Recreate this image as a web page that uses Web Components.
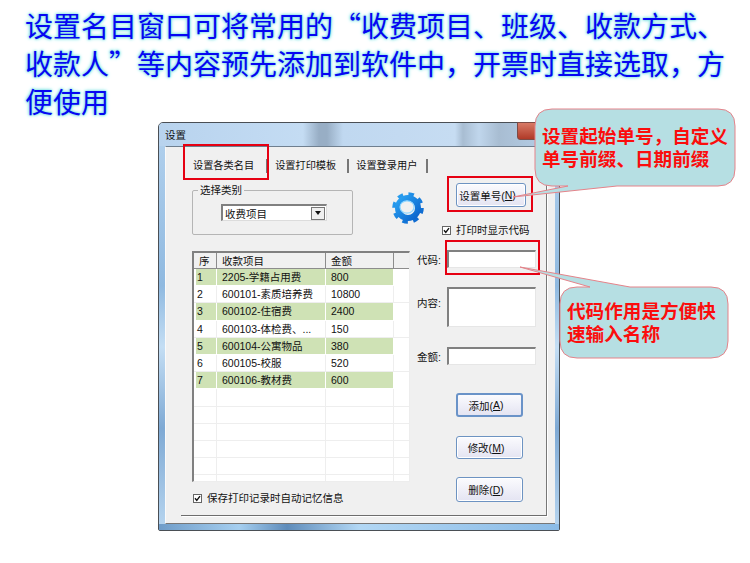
<!DOCTYPE html>
<html lang="zh-CN">
<head>
<meta charset="utf-8">
<title>设置</title>
<style>
    html, body { margin: 0; background: #fff; }
    body { width: 750px; height: 563px; overflow: hidden; position: relative; font-family: "Liberation Sans", "Noto Sans CJK SC", sans-serif; }
</style>
</head>
<body>
<guide-heading>设置名目窗口可将常用的“收费项目、班级、收款方式、收款人”等内容预先添加到软件中，开票时直接选取，方便使用</guide-heading>
<settings-dialog></settings-dialog>

<mark-box style="left:183px;top:144px;width:86px;height:36px"></mark-box>
<mark-box style="left:447px;top:176px;width:86px;height:36px"></mark-box>
<mark-box style="left:445px;top:240px;width:95px;height:35px"></mark-box>

<note-callout style="left:535px;top:109px;width:200px;height:77px" tip="-22,88 33,77 82,77">设置起始单号，自定义<br>单号前缀、日期前缀</note-callout>
<note-callout style="left:560px;top:287px;width:168px;height:71px" tip="-40,-20 30,0 70,0">代码作用是方便快<br>速输入名称</note-callout>

<script>
class GuideHeading extends HTMLElement {
    constructor() {
        super();
        this.attachShadow({ mode: 'open' });
        this.shadowRoot.innerHTML = `
            <style>
                :host {
                    display: block;
                    box-sizing: border-box;
                    width: 730px;
                    height: 122px;
                    padding: 6px 0 0 25px;
                    font: 400 28px/38px "Noto Sans CJK SC", sans-serif;
                    color: #0606f2;
                    text-shadow: 0 0 2px #7fe2e2, 0 0 3px #7fe2e2, 0 0 4px #9aeaea;
                }
            </style>
            <slot></slot>
        `;
    }
}
customElements.define('guide-heading', GuideHeading);

class MarkBox extends HTMLElement {
    constructor() {
        super();
        this.attachShadow({ mode: 'open' });
        this.shadowRoot.innerHTML = `
            <style>
                :host {
                    display: block;
                    position: absolute;
                    box-sizing: border-box;
                    border: 2px solid #e60012;
                    pointer-events: none;
                }
            </style>
        `;
    }
}
customElements.define('mark-box', MarkBox);

class NoteCallout extends HTMLElement {
    constructor() {
        super();
        this.attachShadow({ mode: 'open' });
        const w = this.style.width.replace('px', '') * 1;
        const h = this.style.height.replace('px', '') * 1;
        const tip = this.getAttribute('tip').split(' ').map(p => p.split(',').map(Number));
        const r = 17;
        // the tip joins the top or the bottom side of the bubble, depending on which way it points
        const pointsUp = tip[0][1] < 0;
        const top = pointsUp
            ? `L${tip[1][0]} 0 L${tip[0][0]} ${tip[0][1]} L${tip[2][0]} 0`
            : '';
        const bottom = pointsUp
            ? ''
            : `L${tip[2][0]} ${h} L${tip[0][0]} ${tip[0][1]} L${tip[1][0]} ${h}`;
        const d = `M${r} 0 ${top} L${w - r} 0 Q${w} 0 ${w} ${r} L${w} ${h - r} Q${w} ${h} ${w - r} ${h} ${bottom} L${r} ${h} Q0 ${h} 0 ${h - r} L0 ${r} Q0 0 ${r} 0 Z`;
        this.shadowRoot.innerHTML = `
            <style>
                :host {
                    display: flex;
                    align-items: center;
                    position: absolute;
                    box-sizing: border-box;
                    padding: 0 0 3px 7px;
                    font: 700 18.6px/23px "Noto Sans CJK SC", sans-serif;
                    color: #fb0d0d;
                    white-space: nowrap;
                }
                svg { position: absolute; left: 0; top: 0; overflow: visible; }
                div { position: relative; }
            </style>
            <svg width="${w}" height="${h}"><path d="${d}" fill="#b6dfe3" stroke="#e5838a" stroke-width="1"/></svg>
            <div><slot></slot></div>
        `;
    }
}
customElements.define('note-callout', NoteCallout);

class WinButton extends HTMLElement {
    constructor() {
        super();
        this.attachShadow({ mode: 'open' });
        this.shadowRoot.innerHTML = `
            <style>
                :host {
                    display: flex;
                    align-items: center;
                    justify-content: center;
                    box-sizing: border-box;
                    width: 67px;
                    height: 24px;
                    padding-right: 7px;
                    border: 1px solid #6d93c2;
                    border-radius: 3px;
                    background: linear-gradient(#fbfbfe, #e4e4f2);
                    font-size: 10.5px;
                    color: #111;
                    box-shadow: inset 0 0 0 1px #fff;
                }
                :host([default]) { border: 2px solid #6a93c8; box-shadow: none; }
            </style>
            <slot></slot>
        `;
    }
}
customElements.define('win-button', WinButton);

class WinCheck extends HTMLElement {
    constructor() {
        super();
        this.attachShadow({ mode: 'open' });
        this.shadowRoot.innerHTML = `
            <style>
                :host {
                    display: flex;
                    align-items: center;
                    gap: 5px;
                    font-size: 10.5px;
                    line-height: 12px;
                    color: #111;
                    white-space: nowrap;
                }
                svg { flex: none; }
            </style>
            <svg width="9" height="9" viewBox="0 0 9 9">
                <rect x="0.5" y="0.5" width="8" height="8" fill="#fff" stroke="#666"/>
                <path d="M2 4.2 L3.8 6.4 L7 2.2" fill="none" stroke="#111" stroke-width="1.4"/>
            </svg>
            <slot></slot>
        `;
    }
}
customElements.define('win-check', WinCheck);

class NameTable extends HTMLElement {
    constructor() {
        super();
        this.attachShadow({ mode: 'open' });
        const rows = [
            ['1', '2205-学籍占用费', '800'],
            ['2', '600101-素质培养费', '10800'],
            ['3', '600102-住宿费', '2400'],
            ['4', '600103-体检费、...', '150'],
            ['5', '600104-公寓物品', '380'],
            ['6', '600105-校服', '520'],
            ['7', '600106-教材费', '600'],
            ['', '', ''], ['', '', ''], ['', '', ''], ['', '', ''], ['', '', ''], ['', '', '']
        ];
        const body = rows.map((r, i) => `
            <tr class="${r[0] && i % 2 === 0 ? 'green' : ''}">
                <td class="num"><span>${r[0]}</span></td><td><span>${r[1]}</span></td><td><span>${r[2]}</span></td><td class="rest"></td>
            </tr>`).join('');
        this.shadowRoot.innerHTML = `
            <style>
                :host {
                    display: block;
                    box-sizing: border-box;
                    width: 218px;
                    height: 231px;
                    overflow: hidden;
                    background: #fff;
                    border-style: solid;
                    border-width: 2px 1px 1px 2px;
                    border-color: #808080 #ededed #ededed #808080;
                    font-size: 10.5px;
                    color: #111;
                }
                table { border-collapse: separate; border-spacing: 0; table-layout: fixed; width: 216px; }
                th {
                    height: 15px;
                    padding: 0 0 0 5px;
                    background: #f0f0f0;
                    border-right: 1px solid #8c8c8c;
                    border-bottom: 1px solid #8c8c8c;
                    font-weight: 400;
                    text-align: left;
                    line-height: 14px;
                }
                td {
                    height: 16.2px;
                    padding: 0;
                    border-right: 1px solid #eeeeee;
                    border-bottom: 1px solid #eeeeee;
                    line-height: 17px;
                    white-space: nowrap;
                    overflow: hidden;
                }
                td span { display: block; height: 16.2px; padding-left: 5px; }
                td.num span { margin-left: 2px; padding-left: 1px; }
                tr.green td span { background: #cfe2b5; }
                tr.green td { border-bottom-color: #fff; border-right-color: #fff; }
                .rest { border-right: none; }
            </style>
            <table>
                <colgroup><col style="width:23px"><col style="width:109px"><col style="width:68px"><col></colgroup>
                <tr><th>序</th><th>收款项目</th><th>金额</th><th style="border-right:none"></th></tr>
                ${body}
            </table>
        `;
    }
}
customElements.define('name-table', NameTable);

class SettingsDialog extends HTMLElement {
    constructor() {
        super();
        this.attachShadow({ mode: 'open' });
        this.shadowRoot.innerHTML = `
            <style>
                :host {
                    display: flex;
                    flex-direction: column;
                    box-sizing: border-box;
                    margin-left: 158px;
                    width: 402px;
                    height: 409px;
                    border: 1px solid #4a4f55;
                    border-radius: 5px 5px 2px 2px;
                    background: linear-gradient(180deg, #b4d2ee 0, #8fb9e0 40%, #c4def4 55%, #7ea9d4 75%, #b8d6f0 100%);
                    font-size: 10.5px;
                    color: #111;
                }
                .title {
                    display: flex;
                    align-items: center;
                    justify-content: space-between;
                    height: 23px;
                    flex: none;
                    padding-left: 6px;
                    background: linear-gradient(90deg, #b8d3ee 0, #c4dcf3 36%, #98aec5 40%, #98aec5 42%, #c0d8f0 46%, #c6dcf2 74%, #a8bdd2 76%, #c0d6ec 80%, #a8bdd2 85%, #b8d2ec 100%);
                    border-radius: 4px 4px 0 0;
                }
                .close { width: 22px; height: 16px; margin: -7px 18px 0 0; background: linear-gradient(#d87a66, #b03a28); border: 1px solid #7d4b45; border-radius: 0 0 3px 3px; }
                .frame {
                    flex: 1;
                    display: flex;
                    min-height: 0;
                    padding: 0 4px 0 6px;
                }
                .client {
                    flex: 1;
                    display: flex;
                    box-sizing: border-box;
                    background: #f0f0f0;
                    border-top: 1px solid #6f7f8f;
                    border-left: 1px solid #fafafa;
                    border-bottom: 1px solid #777;
                    padding: 0 8px 7px 15px;
                }
                .page {
                    flex: 1;
                    display: flex;
                    flex-direction: column;
                    padding-left: 11px;
                    border-right: 1px solid #777;
                    border-bottom: 1px solid #6d6d6d;
                    box-shadow: 1px 1px 0 #fff;
                }
                .tabs { display: flex; align-items: center; box-sizing: border-box; height: 36px; flex: none; padding: 2px 0 0 1px; }
                .tabs span { padding-right: 12px; margin-right: 7px; border-right: 2px solid #777; font-size: 10.2px; line-height: 14px; white-space: nowrap; }
                .tabs span:nth-child(2) { padding-right: 11px; }
                .tabs span:nth-child(3) { padding-right: 9px; }
                .top { display: flex; height: 68px; flex: none; }
                .group {
                    position: relative;
                    box-sizing: border-box;
                    width: 161px;
                    height: 45px;
                    margin-top: 7px;
                    padding: 13px 0 0 28px;
                    border: 1px solid #b5b5b5;
                    border-radius: 2px;
                }
                .group b { position: absolute; left: 5px; top: -7px; padding: 0 2px; background: #f0f0f0; font-weight: 400; line-height: 13px; }
                .combo {
                    box-sizing: border-box;
                    display: flex;
                    align-items: center;
                    justify-content: space-between;
                    width: 106px;
                    height: 17px;
                    padding: 0 1px 0 2px;
                    background: #fff;
                    border-style: solid;
                    border-width: 2px 1px 1px 2px;
                    border-color: #808080 #dcdcdc #dcdcdc #808080;
                }
                .combo i { display: flex; align-items: center; justify-content: center; width: 14px; height: 13px; background: #f0f0f0; border: 1px solid #777; box-sizing: border-box; }
                .combo i::after { content: ""; border: 3px solid transparent; border-top: 4px solid #111; border-bottom: 0; }
                .gear { margin: 9px 0 0 39px; width: 32px; height: 32px; flex: none; }
                .side { margin-left: 18px; }
                .side win-button { width: 70px; height: 24px; margin: 0 0 17px 14px; }
                .main { flex: 1; display: grid; grid-template-columns: 218px 119px; column-gap: 7px; }
                .left win-check { margin: 10px 0 0 1px; }
                .form { display: grid; grid-template-columns: 30px 89px; align-content: start; margin-top: -1px; }
                .form label { height: 18px; line-height: 21px; }
                .field {
                    box-sizing: border-box;
                    height: 18px;
                    background: #fff;
                    border-style: solid;
                    border-width: 2px 1px 1px 2px;
                    border-color: #808080 #e6e6e6 #e6e6e6 #808080;
                }
                .area { height: 40px; margin: 19px 0 20px; }
                .form .lab2 { margin-top: 25px; }
                .btns { grid-column: 1 / 3; display: flex; flex-direction: column; gap: 19px; margin: 28px 0 0 39px; }
                .btns win-button:nth-child(2) { height: 23px; }
                .btns win-button:nth-child(3) { height: 25px; margin-top: -1px; }
                .bar { height: 6px; flex: none; background: linear-gradient(90deg, #6f9cc8, #a6cff0 20%, #5f8cba 32%, #b2d7f4 50%, #8bbbe6 100%); }
            </style>
            <div class="title"><span>设置</span><span class="close"></span></div>
            <div class="frame">
                <div class="client">
                    <div class="page">
                        <div class="tabs"><span>设置各类名目</span><span>设置打印模板</span><span>设置登录用户</span></div>
                        <div class="top">
                            <div class="group">
                                <b>选择类别</b>
                                <div class="combo"><span>收费项目</span><i></i></div>
                            </div>
                            <svg class="gear" viewBox="0 0 32 32">
                                <defs>
                                    <linearGradient id="g" x1="0" y1="0" x2="1" y2="1">
                                        <stop offset="0" stop-color="#2aa2f2"/>
                                        <stop offset="1" stop-color="#0a63cc"/>
                                    </linearGradient>
                                </defs>
                                <circle cx="16" cy="16" r="13.2" fill="none" stroke="url(#g)" stroke-width="5.2" stroke-dasharray="5.2 5.17"/>
                                <circle cx="16" cy="16" r="10" fill="none" stroke="url(#g)" stroke-width="6"/>
                                <ellipse cx="15" cy="15" rx="7" ry="6.2" fill="#f0f0f0" stroke="#8fd6ff" stroke-width="1.2"/>
                            </svg>
                            <div class="side">
                                <win-button>设置单号(<u>N</u>)</win-button>
                                <win-check>打印时显示代码</win-check>
                            </div>
                        </div>
                        <div class="main">
                            <div class="left">
                                <name-table></name-table>
                                <win-check>保存打印记录时自动记忆信息</win-check>
                            </div>
                            <div class="form">
                                <label>代码:</label><div class="field"></div>
                                <label class="lab2">内容:</label><div class="field area"></div>
                                <label>金额:</label><div class="field"></div>
                                <div class="btns">
                                    <win-button default>添加(<u>A</u>)</win-button>
                                    <win-button>修改(<u>M</u>)</win-button>
                                    <win-button>删除(<u>D</u>)</win-button>
                                </div>
                            </div>
                        </div>
                    </div>
                </div>
            </div>
            <div class="bar"></div>
        `;
    }
}
customElements.define('settings-dialog', SettingsDialog);
</script>
</body>
</html>
